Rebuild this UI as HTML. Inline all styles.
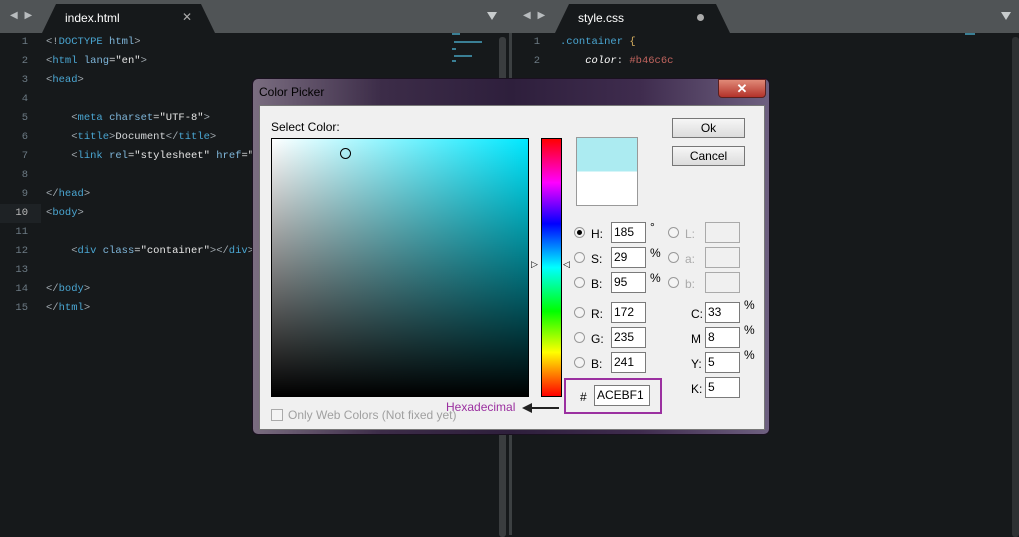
<!DOCTYPE html>
<html><head><style>
*{margin:0;padding:0;box-sizing:border-box}
body{width:1019px;height:535px;background:#16191b;position:relative;overflow:hidden;font-family:"Liberation Sans",sans-serif}
.tabbar{position:absolute;left:0;top:0;width:1019px;height:33px;background:#505456}
.tab{position:absolute;top:4px;height:29px;background:#16191b;clip-path:polygon(14px 0,calc(100% - 14px) 0,100% 100%,0 100%)}
.tabt{position:absolute;top:11px;color:#fff;font-size:12px}
.arr{position:absolute;top:10px;color:#b8bcbe;font-size:10px;letter-spacing:2px}
.code{position:absolute;font-family:"Liberation Mono",monospace;font-size:10.5px;line-height:19px;white-space:pre;color:#d8dadc}
.ln{position:absolute;font-family:"Liberation Mono",monospace;font-size:10.5px;line-height:19px;color:#6c7a84;text-align:right;white-space:pre}
.t{color:#4aa6d2}.a{color:#7fb6da}.b{color:#a4acb2}.s{color:#e6e6e6}
.dlg{position:absolute;left:252px;top:78px;width:518px;height:357px;border-radius:6px;border:1px solid #1a1020;background:linear-gradient(90deg,#7a6d80 0%,#3c2c48 25%,#2e1f3c 50%,#3f2c4e 75%,#6e6080 100%)}
.panel{position:absolute;left:6px;top:26px;width:506px;height:325px;background:#f0f0f0;border:1px solid #777}
.lbl{position:absolute;font-size:12px;color:#000}
.inp{position:absolute;height:21px;background:#fff;border:1px solid #7a7a7a;font-size:12px;padding:2px 0 0 2px}
.dis{background:#f0f0f0;border-color:#aaa}
.rad{position:absolute;width:11px;height:11px;border-radius:50%;border:1px solid #999;background:#f4f4f4}
.btn{position:absolute;width:73px;height:20px;border:1px solid #777;background:linear-gradient(#f6f6f6,#dcdcdc);font-size:12px;text-align:center;line-height:18px}
.mm{position:absolute;height:2px;background:#3a7f95}
</style></head><body>
<div class="tabbar">
<div class="arr" style="left:10px">◀ ▶</div>
<div class="tab" style="left:42px;width:173px"></div>
<div class="tabt" style="left:65px">index.html</div>
<div class="tabt" style="left:182px;color:#aaa;top:10px">✕</div>
<div style="position:absolute;left:487px;top:12px;width:0;height:0;border-left:5px solid transparent;border-right:5px solid transparent;border-top:8px solid #c8cccd"></div>
<div class="arr" style="left:523px">◀ ▶</div>
<div class="tab" style="left:555px;width:175px"></div>
<div class="tabt" style="left:578px">style.css</div>
<div style="position:absolute;left:697px;top:14px;width:7px;height:7px;border-radius:50%;background:#aaa"></div>
<div style="position:absolute;left:1001px;top:12px;width:0;height:0;border-left:5px solid transparent;border-right:5px solid transparent;border-top:8px solid #c8cccd"></div>
</div>
<div style="position:absolute;left:499px;top:37px;width:7px;height:500px;background:#3a3d3f;border-radius:3px"></div>
<div style="position:absolute;left:509px;top:33px;width:3px;height:502px;background:#3c4042"></div>
<div style="position:absolute;left:1012px;top:37px;width:7px;height:500px;background:#2e3133;border-radius:3px"></div>
<div style="position:absolute;left:0;top:204px;width:41px;height:19px;background:#1e2225"></div>
<div class="ln" style="left:8px;top:33px;width:20px">1
2
3
4
5
6
7
8
9
<span style="color:#bbb">10</span>
11
12
13
14
15</div>
<div class="code" style="left:46px;top:33px"><span class="b">&lt;!</span><span class="t">DOCTYPE</span> <span class="a">html</span><span class="b">&gt;</span>
<span class="b">&lt;</span><span class="t">html</span> <span class="a">lang</span>=<span class="s">"en"</span><span class="b">&gt;</span>
<span class="b">&lt;</span><span class="t">head</span><span class="b">&gt;</span>

    <span class="b">&lt;</span><span class="t">meta</span> <span class="a">charset</span>=<span class="s">"UTF-8"</span><span class="b">&gt;</span>
    <span class="b">&lt;</span><span class="t">title</span><span class="b">&gt;</span>Document<span class="b">&lt;/</span><span class="t">title</span><span class="b">&gt;</span>
    <span class="b">&lt;</span><span class="t">link</span> <span class="a">rel</span>=<span class="s">"stylesheet"</span> <span class="a">href</span>=<span class="s">"style.css"</span><span class="b">&gt;</span>

<span class="b">&lt;/</span><span class="t">head</span><span class="b">&gt;</span>
<span class="b">&lt;</span><span class="t">body</span><span class="b">&gt;</span>

    <span class="b">&lt;</span><span class="t">div</span> <span class="a">class</span>=<span class="s">"container"</span><span class="b">&gt;&lt;/</span><span class="t">div</span><span class="b">&gt;</span>

<span class="b">&lt;/</span><span class="t">body</span><span class="b">&gt;</span>
<span class="b">&lt;/</span><span class="t">html</span><span class="b">&gt;</span></div>
<div class="ln" style="left:520px;top:33px;width:20px">1
2</div>
<div class="code" style="left:560px;top:33px"><span class="t">.container</span> <span style="color:#d8b060">{</span>
    <i style="color:#fff">color</i>: <span style="color:#c0645e">#b46c6c</span></div>
<div class="mm" style="left:452px;top:33px;width:8px"></div>
<div class="mm" style="left:454px;top:41px;width:28px"></div>
<div class="mm" style="left:452px;top:48px;width:4px"></div>
<div class="mm" style="left:454px;top:55px;width:18px"></div>
<div class="mm" style="left:452px;top:60px;width:4px"></div>
<div class="mm" style="left:965px;top:33px;width:10px"></div>
<div class="dlg">
<div style="position:absolute;left:6px;top:6px;font-size:12px;color:#000">Color Picker</div>
<div style="position:absolute;left:465px;top:0;width:48px;height:19px;border-radius:0 0 4px 4px;background:linear-gradient(#e08a78,#b3322a);border:1px solid #5a2020;color:#fff;text-align:center;font-size:13px;font-weight:bold;line-height:17px">✕</div>
<div class="panel">
<div class="lbl" style="left:11px;top:14px">Select Color:</div>
<div style="position:absolute;left:11px;top:32px;width:258px;height:259px;border:1px solid #000;background:linear-gradient(to top,#000,rgba(0,0,0,0)),linear-gradient(to right,#fff,#00e8ff)"></div>
<div style="position:absolute;left:80px;top:42px;width:11px;height:11px;border-radius:50%;border:1px solid #000"></div>
<div style="position:absolute;left:281px;top:32px;width:21px;height:259px;border:1px solid #000;background:linear-gradient(#f00,#f0f 17%,#00f 33%,#0ff 50%,#0f0 67%,#ff0 83%,#f00)"></div>
<div style="position:absolute;left:271px;top:153px;font-size:9px">▷</div>
<div style="position:absolute;left:303px;top:153px;font-size:9px">◁</div>
<div style="position:absolute;left:316px;top:31px;width:62px;height:69px;border:1px solid #999;background:linear-gradient(#acebf1 50%,#fff 50%)"></div>
<div class="btn" style="left:412px;top:12px">Ok</div>
<div class="btn" style="left:412px;top:40px">Cancel</div>
<div class="rad" style="left:314px;top:121px"><div style="width:5px;height:5px;background:#000;border-radius:50%;margin:2px"></div></div>
<div class="lbl" style="left:331px;top:121px">H:</div><div class="inp" style="left:351px;top:116px;width:35px">185</div><div class="lbl" style="left:390px;top:114px">°</div>
<div class="rad" style="left:314px;top:146px"></div><div class="lbl" style="left:331px;top:146px">S:</div><div class="inp" style="left:351px;top:141px;width:35px">29</div><div class="lbl" style="left:390px;top:140px">%</div>
<div class="rad" style="left:314px;top:171px"></div><div class="lbl" style="left:331px;top:171px">B:</div><div class="inp" style="left:351px;top:166px;width:35px">95</div><div class="lbl" style="left:390px;top:165px">%</div>
<div class="rad" style="left:408px;top:121px"></div><div class="lbl" style="left:425px;top:121px;color:#aaa">L:</div><div class="inp dis" style="left:445px;top:116px;width:35px"></div>
<div class="rad" style="left:408px;top:146px"></div><div class="lbl" style="left:425px;top:146px;color:#aaa">a:</div><div class="inp dis" style="left:445px;top:141px;width:35px"></div>
<div class="rad" style="left:408px;top:171px"></div><div class="lbl" style="left:425px;top:171px;color:#aaa">b:</div><div class="inp dis" style="left:445px;top:166px;width:35px"></div>
<div class="rad" style="left:314px;top:201px"></div><div class="lbl" style="left:331px;top:201px">R:</div><div class="inp" style="left:351px;top:196px;width:35px">172</div>
<div class="rad" style="left:314px;top:226px"></div><div class="lbl" style="left:331px;top:226px">G:</div><div class="inp" style="left:351px;top:221px;width:35px">235</div>
<div class="rad" style="left:314px;top:251px"></div><div class="lbl" style="left:331px;top:251px">B:</div><div class="inp" style="left:351px;top:246px;width:35px">241</div>
<div class="lbl" style="left:431px;top:201px">C:</div><div class="inp" style="left:445px;top:196px;width:35px">33</div><div class="lbl" style="left:484px;top:192px">%</div>
<div class="lbl" style="left:431px;top:226px">M</div><div class="inp" style="left:445px;top:221px;width:35px">8</div><div class="lbl" style="left:484px;top:217px">%</div>
<div class="lbl" style="left:431px;top:251px">Y:</div><div class="inp" style="left:445px;top:246px;width:35px">5</div><div class="lbl" style="left:484px;top:242px">%</div>
<div class="lbl" style="left:431px;top:276px">K:</div><div class="inp" style="left:445px;top:271px;width:35px">5</div>
<div style="position:absolute;left:304px;top:272px;width:98px;height:36px;border:2px solid #9b30a0"></div>
<div class="lbl" style="left:320px;top:284px">#</div>
<div class="inp" style="left:334px;top:279px;width:56px">ACEBF1</div>
<div class="lbl" style="left:186px;top:294px;color:#9b30a0">Hexadecimal</div>
<div style="position:absolute;left:268px;top:301px;width:31px;height:2px;background:#222"></div>
<div style="position:absolute;left:262px;top:297px;width:0;height:0;border-top:5px solid transparent;border-bottom:5px solid transparent;border-right:10px solid #222"></div>
<div style="position:absolute;left:11px;top:303px;width:12px;height:12px;border:1px solid #aaa;background:#f4f4f4"></div>
<div class="lbl" style="left:28px;top:302px;color:#a0a0a0">Only Web Colors (Not fixed yet)</div>
</div></div>
</body></html>
